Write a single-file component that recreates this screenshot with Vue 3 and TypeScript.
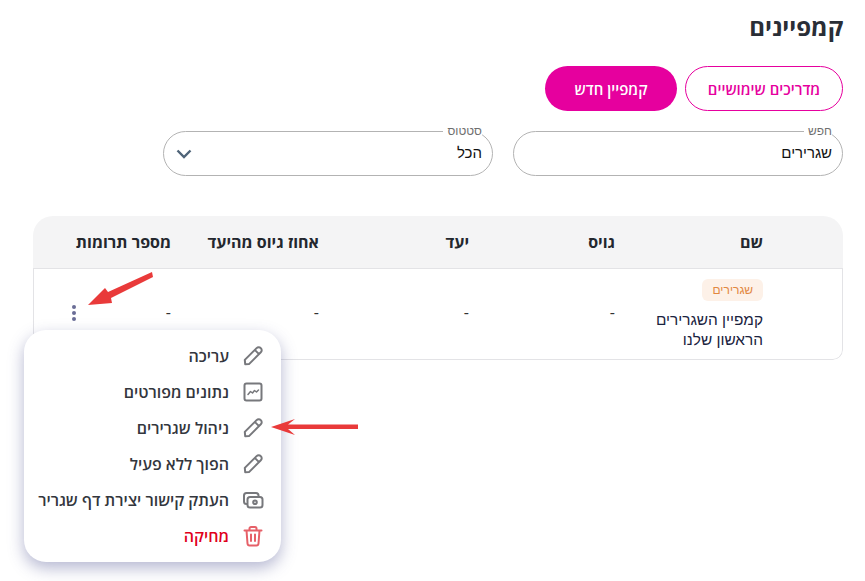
<script setup lang="ts">
const columns = ['שם', 'גויס', 'יעד', 'אחוז גיוס מהיעד', 'מספר תרומות']
const pencil = 'M4.2 20.2 L3.8 15.9 L15.6 4.1 C16.8 2.9 18.6 2.9 19.8 4.1 C21 5.3 21 7.1 19.8 8.3 L8 20.1 Z M13.8 5.9 L18 10.1'
const menu = [
  { label: 'עריכה', icon: 'pencil' },
  { label: 'נתונים מפורטים', icon: 'chart' },
  { label: 'ניהול שגרירים', icon: 'pencil' },
  { label: 'הפוך ללא פעיל', icon: 'pencil' },
  { label: 'העתק קישור יצירת דף שגריר', icon: 'cash' },
  { label: 'מחיקה', icon: 'trash' },
]
</script>

<template>
  <div class="page" dir="rtl">
    <h1 class="title">קמפיינים</h1>
    <div class="actions">
      <button class="btn outline">מדריכים שימושיים</button>
      <button class="btn solid">קמפיין חדש</button>
    </div>
    <div class="filters">
      <fieldset class="field">
        <legend>חפש</legend>
        <span class="value">שגרירים</span>
      </fieldset>
      <fieldset class="field">
        <legend>סטטוס</legend>
        <span class="value">הכל</span>
        <svg class="chevron" width="18" height="12" viewBox="0 0 18 12"><path d="M2.5 2.5 L9 9 L15.5 2.5" fill="none" stroke="#4f6478" stroke-width="2.4" /></svg>
      </fieldset>
    </div>

    <div class="table">
      <div class="row head">
        <div v-for="c in columns" :key="c">{{ c }}</div>
      </div>
      <div class="row body">
        <div class="name-cell">
          <span class="tag">שגרירים</span>
          <span class="name">קמפיין השגרירים הראשון שלנו</span>
        </div>
        <div class="dash">-</div>
        <div class="dash">-</div>
        <div class="dash">-</div>
        <div class="dash last">
          -
          <span class="dots"><i></i><i></i><i></i></span>
        </div>
      </div>
    </div>

    <ul class="menu">
      <li v-for="m in menu" :key="m.label" :class="{ danger: m.icon === 'trash' }">
        <svg class="icon" width="24" height="24" viewBox="0 0 24 24" fill="none" stroke-width="2" stroke-linejoin="round" stroke-linecap="round">
          <path v-if="m.icon === 'pencil'" :d="pencil" />
          <template v-else-if="m.icon === 'chart'">
            <rect x="3.5" y="3.5" width="17" height="17" rx="2" />
            <path d="M7 14.5 L9.5 11.5 L11.5 13 L13.5 10.5 L15.5 12 L17.5 10" stroke-width="1.5" />
          </template>
          <template v-else-if="m.icon === 'cash'">
            <path d="M5.5 16 C4 16 3 15 3 13.5 V7.5 C3 6 4 5 5.5 5 H15 C16.5 5 17.5 6 17.5 7.5 V9" />
            <rect x="6.5" y="9" width="15" height="10.5" rx="2.5" />
            <circle cx="14" cy="14.2" r="1.8" />
          </template>
          <template v-else>
            <path d="M3.5 6.5 H20.5 M8.5 6.5 V4.5 C8.5 3.7 9.2 3 10 3 H14 C14.8 3 15.5 3.7 15.5 4.5 V6.5 M5.5 6.5 L6.5 19.5 C6.6 20.6 7.4 21.5 8.5 21.5 H15.5 C16.6 21.5 17.4 20.6 17.5 19.5 L18.5 6.5 M10 10.5 V17 M14 10.5 V17" />
          </template>
        </svg>
        <span>{{ m.label }}</span>
      </li>
    </ul>

    <svg class="arrow arrow-a" width="70" height="38" viewBox="0 0 70 38">
      <path d="M3 35 L20 18 L23 22 L67 2 L68 7 L26 28 L27 33 Z" fill="#e93a3a" />
    </svg>
    <svg class="arrow arrow-b" width="92" height="24" viewBox="0 0 92 24">
      <path d="M3 12 L27 4 L20 9.5 L90 9.5 L90 14 L20 14 L27 20 Z" fill="#e93a3a" />
    </svg>
  </div>
</template>

<style>
html, body { margin: 0; background: #fff; }
</style>

<style scoped>
.page {
  position: relative;
  box-sizing: border-box;
  width: 865px;
  height: 581px;
  overflow: hidden;
  padding: 0 22px;
  font-family: "Open Sans", "Noto Sans", "Liberation Sans", sans-serif;
  color: #212529;
}
.title {
  margin: 0;
  padding-top: 12px;
  height: 66px;
  box-sizing: border-box;
  font-size: 24px;
  line-height: 30px;
  font-weight: 700;
  color: #2a2e36;
}
.actions {
  display: flex;
  gap: 8px;
}
.btn {
  height: 45px;
  border-radius: 23px;
  font: 600 15px "Open Sans", "Noto Sans", sans-serif;
  padding: 0;
  box-sizing: border-box;
}
.outline {
  width: 158px;
  background: #fff;
  color: #e6009e;
  border: 1px solid #e6009e;
}
.solid {
  width: 132px;
  background: #e6009e;
  color: #fff;
  border: 0;
}
.filters {
  display: flex;
  gap: 20px;
  margin-top: 20px;
}
.field {
  position: relative;
  box-sizing: border-box;
  width: 330px;
  height: 52px;
  margin: -7px 0 0;
  padding: 0 10px 9px 14px;
  border: 1px solid #b3b3b3;
  border-radius: 23px;
  display: flex;
  align-items: center;
}
.field legend {
  padding: 0 0 0 4px;
  margin-right: 0;
  font-family: "Liberation Sans", sans-serif;
  font-size: 12px;
  line-height: 14px;
  color: #6f6f6f;
}
.value {
  font-family: "Liberation Sans", sans-serif;
  font-size: 15px;
  color: #111;
}
.chevron {
  position: absolute;
  left: 11px;
  top: 10px;
}
.table {
  box-sizing: border-box;
  width: 810px;
  height: 144px;
  margin: 40px 0 0;
  border-radius: 20px 20px 10px 10px;
  overflow: hidden;
  display: flex;
  flex-direction: column;
}
.row {
  display: grid;
  grid-template-columns: 148px 146px 150px 148px 1fr;
  padding-right: 80px;
}
.head {
  height: 53px;
  flex: none;
  align-items: center;
  background: #f4f4f5;
  border-bottom: 1px solid #e3e3e6;
  box-sizing: border-box;
  font-size: 16px;
  font-weight: 700;
  color: #23272e;
}
.body {
  flex: 1;
  border: 1px solid #e3e3e6;
  border-top: 0;
  border-radius: 0 0 10px 10px;
  padding-right: 79px;
}
.name-cell {
  display: flex;
  flex-direction: column;
  align-items: flex-start;
  padding-top: 10px;
}
.tag {
  background: #fdf1e8;
  color: #e2873f;
  font-family: "Liberation Sans", sans-serif;
  font-size: 12px;
  line-height: 22px;
  padding: 0 10px;
  border-radius: 6px;
}
.name {
  width: 112px;
  margin-top: 9px;
  font-family: "Liberation Sans", sans-serif;
  font-size: 15.4px;
  line-height: 20px;
  color: #1a2340;
}
.dash {
  padding-top: 33px;
  font-size: 16px;
  line-height: 20px;
  color: #333;
}
.last {
  position: relative;
}
.dots {
  position: absolute;
  left: 38px;
  top: 36px;
  display: flex;
  flex-direction: column;
  gap: 2px;
}
.dots i {
  width: 4px;
  height: 4px;
  border-radius: 50%;
  background: #6a6d96;
}
.menu {
  position: absolute;
  left: 24px;
  top: 330px;
  box-sizing: border-box;
  width: 257px;
  height: 232px;
  margin: 0;
  padding: 8px 16px 0 0;
  list-style: none;
  background: #fff;
  border-radius: 22px;
  box-shadow: 0 6px 16px rgba(70, 75, 140, 0.4);
}
.menu li {
  display: flex;
  align-items: center;
  gap: 12px;
  height: 36px;
  font-size: 16px;
  font-weight: 600;
  color: #33363d;
  white-space: nowrap;
}
.icon {
  stroke: #77787c;
  flex: none;
}
.danger {
  color: #e0001b !important;
}
.danger .icon {
  stroke: #e66068;
}
.arrow {
  position: absolute;
}
.arrow-a {
  left: 85px;
  top: 270px;
}
.arrow-b {
  left: 268px;
  top: 415px;
}
</style>
